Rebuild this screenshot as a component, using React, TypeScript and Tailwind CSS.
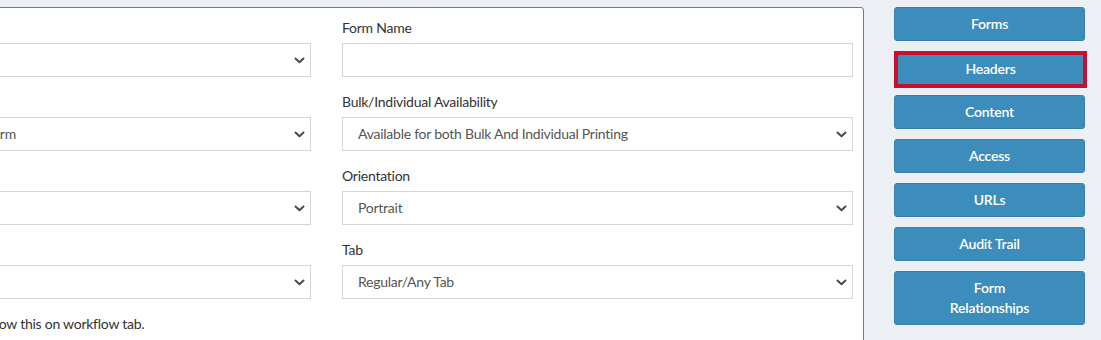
import React from "react";

const Chevron = () => (
  <svg width="11" height="7" viewBox="0 0 11 7" className="shrink-0">
    <path d="M1.5 1.5 L5.5 5.2 L9.5 1.5" fill="none" stroke="#4a4a4a" strokeWidth="2" strokeLinecap="round" strokeLinejoin="round" />
  </svg>
);

const FakeSelect = ({ value, pad = "pl-[15px]" }: { value?: string; pad?: string }) => (
  <div className={`h-[34px] border border-[#d2d6de] bg-white flex items-center justify-between pr-[5px] ${pad}`}>
    <span className="text-[14px] text-[#555] whitespace-nowrap tracking-[-0.25px] -mt-[1px]">{value ?? ""}</span>
    <Chevron />
  </div>
);

const Group = ({ label, children }: { label: string; children: React.ReactNode }) => (
  <div className="mb-[15px]">
    <div className="h-[20px] leading-[20px] text-[14px] text-[#333] mb-[5px] whitespace-nowrap tracking-[-0.25px]">{label}</div>
    {children}
  </div>
);

const NavButton = ({ children, active }: { children: React.ReactNode; active?: boolean }) =>
  active ? (
    <div className="w-[193px] h-[37px] mb-[7px] pb-[2px] bg-[#3c8dbc] border-[4px] border-[#c8102e] text-white text-[14px] font-semibold flex items-center justify-center leading-[20px] tracking-[-0.2px]">
      {children}
    </div>
  ) : (
    <div className="w-[191px] min-h-[34px] mb-[10px] py-[6px] bg-[#3c8dbc] border border-[#367fa9] rounded-[3px] text-white text-[14px] font-semibold text-center leading-[20px] tracking-[-0.2px]">
      {children}
    </div>
  );

export default function App() {
  return (
    <div className="w-[1101px] h-[340px] overflow-hidden bg-[#ecf0f5] flex font-['Lato',sans-serif]">
      <div className="shrink-0 ml-[-211px] mt-[7px] w-[1075px] h-[400px] bg-white border border-[#3c8dbc] rounded-[3px] pt-[10px] px-[10px]">
        <div className="grid grid-cols-[511px_511px] gap-x-[31px]">
          <div>
            <Group label="Form Type">
              <FakeSelect />
            </Group>
            <Group label="Form Category">
              <FakeSelect value="Printable Form" pad="pl-[128px]" />
            </Group>
            <Group label="Group">
              <FakeSelect />
            </Group>
            <Group label="Status">
              <FakeSelect />
            </Group>
            <div className="h-[20px] leading-[20px] mt-[2px] text-[14px] text-[#333] pl-[184px] whitespace-nowrap tracking-[-0.25px]">Show this on workflow tab.</div>
          </div>
          <div>
            <Group label="Form Name">
              <div className="h-[34px] border border-[#d2d6de] bg-white" />
            </Group>
            <Group label="Bulk/Individual Availability">
              <FakeSelect value="Available for both Bulk And Individual Printing" />
            </Group>
            <Group label="Orientation">
              <FakeSelect value="Portrait" />
            </Group>
            <Group label="Tab">
              <FakeSelect value="Regular/Any Tab" />
            </Group>
          </div>
        </div>
      </div>
      <div className="ml-[30px] pt-[7px] flex flex-col">
        <NavButton>Forms</NavButton>
        <NavButton active>Headers</NavButton>
        <NavButton>Content</NavButton>
        <NavButton>Access</NavButton>
        <NavButton>URLs</NavButton>
        <NavButton>Audit Trail</NavButton>
        <NavButton>
          Form
          <br />
          Relationships
        </NavButton>
      </div>
    </div>
  );
}
